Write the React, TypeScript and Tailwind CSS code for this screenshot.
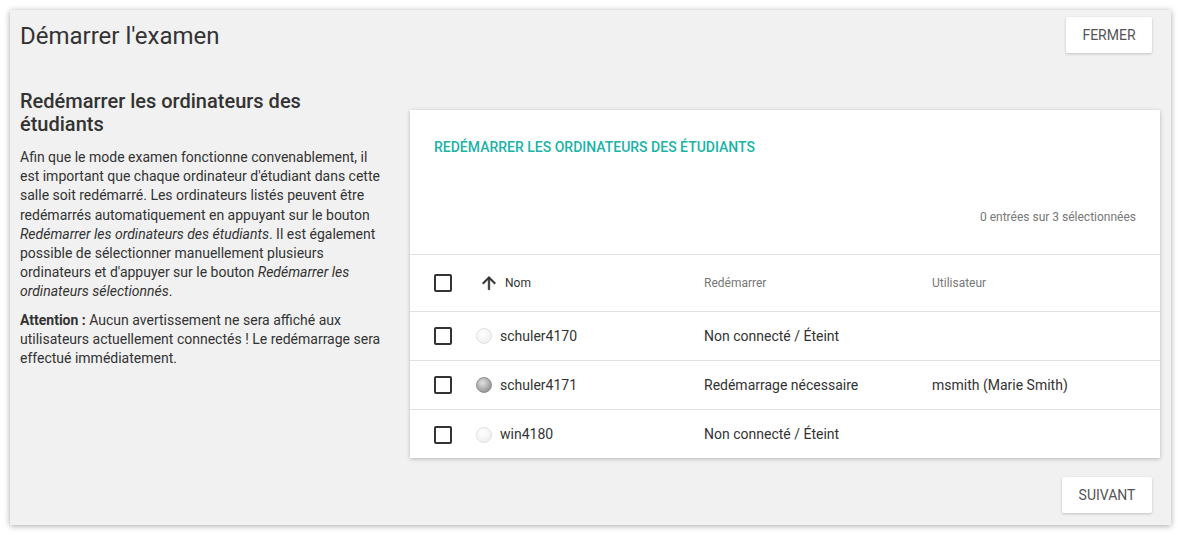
import React from "react";

const rows = [
  { name: "schuler4170", status: "Non connecté / Éteint", user: "", on: false },
  { name: "schuler4171", status: "Redémarrage nécessaire", user: "msmith (Marie Smith)", on: true },
  { name: "win4180", status: "Non connecté / Éteint", user: "", on: false },
];

function Checkbox() {
  return <div className="w-[18px] h-[18px] border-2 border-[#333] rounded-[2px] bg-white" />;
}

function Dot({ on }: { on: boolean }) {
  return (
    <div
      className={
        on
          ? "w-[16px] h-[16px] rounded-full bg-[radial-gradient(circle_at_40%_35%,#e0e0e0,#9a9a9a_70%,#8a8a8a)] border border-[#8f8f8f]"
          : "w-[16px] h-[16px] rounded-full bg-[radial-gradient(circle_at_40%_35%,#ffffff,#f3f3f3_60%,#e8e8e8)] border border-[#e2e2e2]"
      }
    />
  );
}

export default function App() {
  return (
    <div className="w-[1181px] h-[535px] bg-white pt-[10px] px-[10px] font-['Roboto',sans-serif]">
      <div className="w-[1161px] h-[515px] bg-[#f1f1f1] shadow-[0_1px_6px_rgba(0,0,0,0.35)] flex flex-col">
        <div className="flex justify-between items-start h-[43px]">
          <h1 className="text-[24px] leading-[28px] text-[#333] pl-[10px] pt-[12px]">Démarrer l'examen</h1>
          <button className="mt-[7px] mr-[19px] w-[86px] h-[36px] bg-white rounded-[2px] shadow-[0_1px_3px_rgba(0,0,0,0.2)] text-[14px] text-[#555] uppercase">
            Fermer
          </button>
        </div>
        <div className="flex mt-[57px]">
          <div className="w-[400px] pl-[10px] pr-[25px] -mt-[20px]">
            <h2 className="text-[20px] leading-[23px] font-medium text-[#333]">Redémarrer les ordinateurs des étudiants</h2>
            <p className="mt-[12px] text-[14px] leading-[19.2px] text-[#333]">
              Afin que le mode examen fonctionne convenablement, il est important que chaque ordinateur d'étudiant dans cette salle soit redémarré. Les ordinateurs listés peuvent être redémarrés automatiquement en appuyant sur le bouton <i>Redémarrer les ordinateurs des étudiants</i>. Il est également possible de sélectionner manuellement plusieurs ordinateurs et d'appuyer sur le bouton <i>Redémarrer les ordinateurs sélectionnés</i>.
            </p>
            <p className="mt-[9px] text-[14px] leading-[19.2px] text-[#333]">
              <b className="font-bold">Attention :</b> Aucun avertissement ne sera affiché aux utilisateurs actuellement connectés ! Le redémarrage sera effectué immédiatement.
            </p>
          </div>
          <div className="w-[750px] h-[348px] bg-white shadow-[0_1px_4px_rgba(0,0,0,0.25)]">
            <div className="h-[145px] px-[24px] flex flex-col border-b border-[#e0e0e0]">
              <div className="mt-[27px] text-[14px] leading-[20px] font-medium text-[#1ab3a6]">REDÉMARRER LES ORDINATEURS DES ÉTUDIANTS</div>
              <div className="mt-[53px] text-right text-[12px] leading-[14px] text-[#777]">0 entrées sur 3 sélectionnées</div>
            </div>
            <div className="grid grid-cols-[42px_228px_228px_1fr] pl-[24px] h-[57px] items-center border-b border-[#e0e0e0]">
              <Checkbox />
              <div className="flex items-center pl-[3px]">
                <svg width="20" height="20" viewBox="0 0 24 24" className="fill-[#333]">
                  <path d="M4 12l1.41 1.41L11 7.83V20h2V7.83l5.58 5.59L20 12l-8-8-8 8z" stroke="#333" strokeWidth="0.6" />
                </svg>
                <span className="ml-[6px] text-[12px] text-[#333]">Nom</span>
              </div>
              <div className="text-[12px] text-[#777]">Redémarrer</div>
              <div className="text-[12px] text-[#777]">Utilisateur</div>
            </div>
            {rows.map((r, i) => (
              <div
                key={r.name}
                className={
                  "grid grid-cols-[42px_228px_228px_1fr] pl-[24px] h-[49px] items-center text-[14px] text-[#333] " +
                  (i < rows.length - 1 ? "border-b border-[#e0e0e0]" : "")
                }
              >
                <Checkbox />
                <div className="flex items-center">
                  <Dot on={r.on} />
                  <span className="ml-[8px]">{r.name}</span>
                </div>
                <div>{r.status}</div>
                <div>{r.user}</div>
              </div>
            ))}
          </div>
        </div>
        <div className="flex justify-end mt-[19px] pr-[19px]">
          <button className="w-[90px] h-[36px] bg-white rounded-[2px] shadow-[0_1px_3px_rgba(0,0,0,0.2)] text-[14px] text-[#555] uppercase">
            Suivant
          </button>
        </div>
      </div>
    </div>
  );
}
